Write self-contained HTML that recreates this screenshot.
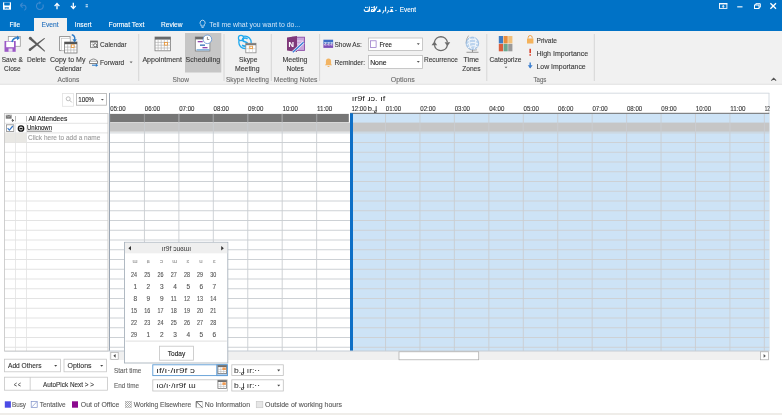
<!DOCTYPE html>
<html><head><meta charset="utf-8">
<style>
*{margin:0;padding:0}
html,body{width:782px;height:415px;overflow:hidden;background:#fff}
svg{will-change:transform;position:absolute;left:0;top:0;font-family:"Liberation Sans",sans-serif}
text{stroke-width:0.12px}
</style></head><body>
<svg width="782" height="415" viewBox="0 0 782 415">
<rect x="0" y="0" width="782" height="31" fill="#0072c6" stroke="none" stroke-width="1" /><rect x="34" y="18" width="33" height="13" fill="#f1f1f1" stroke="none" stroke-width="1" /><rect x="3" y="2" width="8" height="7.7" fill="#fff" stroke="none" stroke-width="1" /><rect x="3" y="2" width="8" height="0.5" fill="#0072c6" stroke="none" stroke-width="1" opacity="0.6"/><path d="M4.2 2.5 H9.8 V4.4 Q9.8 5.6 8.6 5.6 H5.4 Q4.2 5.6 4.2 4.4z" fill="#0072c6" stroke="none" stroke-width="1" /><rect x="4.7" y="7.3" width="4.2" height="1.3" fill="#0072c6" stroke="none" stroke-width="1" /><rect x="6.4" y="7.9" width="0.8" height="0.7" fill="#fff" stroke="none" stroke-width="1" /><path d="M20.2 5.3 L22.6 2.9 M20.2 5.3 L22.6 7.7 M20.6 5.3 H24.3 A2.6 2.6 0 0 1 24.3 10.2" fill="none" stroke="#3d8ad0" stroke-width="1.1" /><path d="M42.9 4.6 A3.4 3.4 0 1 1 39.8 2.7" fill="none" stroke="#3d8ad0" stroke-width="1.1" /><path d="M39.2 1.2 L41.4 2.8 L39.2 4.4z" fill="#3d8ad0" stroke="none" stroke-width="1" /><path d="M57 9.2V3.6 M54.6 6.1 L57 3.4 L59.4 6.1" fill="none" stroke="#fff" stroke-width="1.3" /><path d="M73.3 2.8V8.4 M70.9 5.9 L73.3 8.6 L75.7 5.9" fill="none" stroke="#fff" stroke-width="1.3" /><rect x="85.6" y="4.4" width="2.3" height="0.9" fill="#fff" stroke="none" stroke-width="1" /><rect x="85.6" y="6.3" width="2.3" height="0.9" fill="#fff" stroke="none" stroke-width="1" /><path d="M364.3 9.3 Q364 11.5 366 11.5 H368.2 V9.6 M369.4 6.6 V11.5 M370.8 11.5 H373.3 Q373.6 9.4 372.2 9.5 Q371 9.6 371.6 11 M374.3 6 V11.5 L377 6.6 M377 11.5 H380.6 M383.9 10.1 Q384.1 12.6 382.2 13.2 M385.6 6.6 V11.5 M388.4 10.1 Q388.6 12.6 386.7 13.2 M389.5 11.5 H393.3" fill="none" stroke="#fff" stroke-width="1.1" /><circle cx="365.6" cy="7.4" r="0.65" fill="#fff"/><circle cx="367.1" cy="7.4" r="0.65" fill="#fff"/><circle cx="371.7" cy="7.4" r="0.65" fill="#fff"/><circle cx="373.1" cy="7.4" r="0.65" fill="#fff"/><circle cx="391" cy="7.4" r="0.65" fill="#fff"/><circle cx="392.5" cy="7.4" r="0.65" fill="#fff"/><circle cx="379.6" cy="10.4" r="1.05" fill="#fff"/><circle cx="391.6" cy="10.2" r="1.15" fill="#fff"/><text x="394.8" y="12" font-size="7.2" fill="#fff" stroke="#fff" textLength="2.4" lengthAdjust="spacingAndGlyphs" >-</text><text x="399.8" y="12" font-size="7.5" fill="#fff" stroke="#fff" textLength="16.3" lengthAdjust="spacingAndGlyphs" >Event</text><rect x="719.5" y="3.6" width="7.4" height="4.8" fill="none" stroke="#fff" stroke-width="0.9" /><rect x="719.1" y="3.2" width="8.2" height="1.2" fill="#fff" stroke="none" stroke-width="1" /><path d="M723.2 4.9 L721.6 6.6 H724.8z M722.8 6.4 h0.8 v1.6 h-0.8z" fill="#fff" stroke="none" stroke-width="1" /><rect x="737.2" y="6.3" width="5.3" height="1.1" fill="#fff" stroke="none" stroke-width="1" /><rect x="754.5" y="5" width="4.5" height="3.5" fill="none" stroke="#fff" stroke-width="1" /><path d="M755.8 5V3.7h4.5v3.5h-1.3" fill="none" stroke="#fff" stroke-width="1" /><path d="M770.4 3.3 L776 8.8 M776 3.3 L770.4 8.8" fill="none" stroke="#fff" stroke-width="1.3" /><text x="9.6" y="27.2" font-size="7.5" fill="#fff" stroke="#fff" textLength="10.4" lengthAdjust="spacingAndGlyphs" >File</text><text x="41.5" y="27.2" font-size="7.5" fill="#2672be" stroke="#2672be" textLength="17" lengthAdjust="spacingAndGlyphs" >Event</text><text x="74.8" y="27.2" font-size="7.5" fill="#fff" stroke="#fff" textLength="16.7" lengthAdjust="spacingAndGlyphs" >Insert</text><text x="108.5" y="27.2" font-size="7.5" fill="#fff" stroke="#fff" textLength="35.8" lengthAdjust="spacingAndGlyphs" >Format Text</text><text x="161" y="27.2" font-size="7.5" fill="#fff" stroke="#fff" textLength="21.5" lengthAdjust="spacingAndGlyphs" >Review</text><path d="M202.6 20.2 a2.6 2.6 0 0 0 -1.6 4.6 v1.3 h3.2 v-1.3 a2.6 2.6 0 0 0 -1.6 -4.6z" fill="none" stroke="#e0ecf8" stroke-width="0.8" /><rect x="201.5" y="27" width="2.2" height="0.7" fill="#e0ecf8" stroke="none" stroke-width="1" /><text x="209.2" y="27.2" font-size="7.5" fill="#d2e4f6" stroke="#d2e4f6" textLength="91" lengthAdjust="spacingAndGlyphs" style="stroke-width:0">Tell me what you want to do...</text><rect x="0" y="31" width="782" height="53" fill="#f1f1f1" stroke="none" stroke-width="1" /><line x1="0" y1="84.3" x2="782" y2="84.3" stroke="#dedede" stroke-width="0.9" /><rect x="8.3" y="36.5" width="12" height="9.8" fill="#fff" stroke="#9a9a9a" stroke-width="0.8" /><rect x="4.5" y="41" width="11.2" height="10.8" fill="#9b59c6" stroke="none" stroke-width="1" /><rect x="6.2" y="41.6" width="7.8" height="5.6" fill="#fff" stroke="none" stroke-width="1" /><rect x="8.5" y="48.5" width="4" height="3.3" fill="#e8dcf0" stroke="none" stroke-width="1" /><path d="M12 42 Q13 37.5 18 37.8" fill="none" stroke="#2f7dc8" stroke-width="1.6" /><path d="M17 35.6 L20 37.9 L17 40.2z" fill="#2f7dc8" stroke="none" stroke-width="1" /><text x="1.7" y="62" font-size="7.5" fill="#3c3c3c" stroke="#3c3c3c" textLength="21.1" lengthAdjust="spacingAndGlyphs" >Save &amp;</text><text x="4" y="71" font-size="7.5" fill="#3c3c3c" stroke="#3c3c3c" textLength="16.7" lengthAdjust="spacingAndGlyphs" >Close</text><path d="M29.30 39.21 L44.07 51.27 L44.73 50.53 L31.10 37.19z" fill="#5c5c5c" stroke="none" stroke-width="1" /><circle cx="30.2" cy="38.2" r="1.35" fill="#5c5c5c"/><circle cx="44.4" cy="50.9" r="0.5" fill="#5c5c5c"/><path d="M30.63 50.65 L44.78 38.76 L44.22 38.04 L29.17 48.75z" fill="#5c5c5c" stroke="none" stroke-width="1" /><circle cx="29.9" cy="49.7" r="1.2" fill="#5c5c5c"/><circle cx="44.5" cy="38.4" r="0.45" fill="#5c5c5c"/><text x="27" y="62" font-size="7.5" fill="#3c3c3c" stroke="#3c3c3c" textLength="19" lengthAdjust="spacingAndGlyphs" >Delete</text><rect x="59.6" y="36.6" width="10.5" height="14" fill="#fff" stroke="#8c8c8c" stroke-width="0.9" /><rect x="61.6" y="38.3" width="8.5" height="12.3" fill="#fff" stroke="#bdbdbd" stroke-width="0.6" /><rect x="64.6" y="42" width="12.4" height="11" fill="#fff" stroke="#777" stroke-width="0.8" /><rect x="64.6" y="42" width="12.4" height="2.2" fill="#555" stroke="none" stroke-width="1" /><line x1="67.69999999999999" y1="44.2" x2="67.69999999999999" y2="53" stroke="#999" stroke-width="0.5" /><line x1="70.8" y1="44.2" x2="70.8" y2="53" stroke="#999" stroke-width="0.5" /><line x1="73.89999999999999" y1="44.2" x2="73.89999999999999" y2="53" stroke="#999" stroke-width="0.5" /><line x1="64.6" y1="47.1" x2="77" y2="47.1" stroke="#999" stroke-width="0.5" /><line x1="64.6" y1="50.0" x2="77" y2="50.0" stroke="#999" stroke-width="0.5" /><rect x="71.3" y="44.8" width="2.8" height="2.6" fill="#fff" stroke="#e8912e" stroke-width="0.8" /><path d="M71.8 34.7 Q75.5 35.5 74.6 40" fill="none" stroke="#2f7dc8" stroke-width="1.4" /><path d="M72.4 39.2 L74.6 42.4 L76.8 39.2z" fill="#2f7dc8" stroke="none" stroke-width="1" /><text x="49.9" y="62" font-size="7.5" fill="#3c3c3c" stroke="#3c3c3c" textLength="35.6" lengthAdjust="spacingAndGlyphs" >Copy to My</text><text x="54.9" y="71" font-size="7.5" fill="#3c3c3c" stroke="#3c3c3c" textLength="26.7" lengthAdjust="spacingAndGlyphs" >Calendar</text><rect x="90.5" y="41" width="7" height="6.3" fill="#fff" stroke="#6a6a6a" stroke-width="0.8" /><rect x="90.5" y="41" width="7" height="1.5" fill="#6a6a6a" stroke="none" stroke-width="1" /><line x1="92.8" y1="42.5" x2="92.8" y2="47.3" stroke="#aaa" stroke-width="0.5" /><line x1="90.5" y1="44.6" x2="94.5" y2="44.6" stroke="#aaa" stroke-width="0.5" /><circle cx="95.2" cy="45.2" r="1.6" fill="#fff" stroke="#555" stroke-width="0.8"/><line x1="96.3" y1="46.3" x2="97.9" y2="47.9" stroke="#555" stroke-width="0.9" /><text x="100" y="47" font-size="7.5" fill="#3c3c3c" stroke="#3c3c3c" textLength="26.6" lengthAdjust="spacingAndGlyphs" >Calendar</text><path d="M89.5 63.5 V61 Q93.5 57 97.5 61 V63.5 z" fill="#fff" stroke="#666" stroke-width="0.8" /><line x1="89.6" y1="61.2" x2="97.4" y2="61.2" stroke="#666" stroke-width="0.6" /><path d="M92 65.2 H96.5" fill="none" stroke="#2f7dc8" stroke-width="1.1" /><path d="M95.8 63.4 L98.2 65.2 L95.8 67z" fill="#2f7dc8" stroke="none" stroke-width="1" /><text x="100" y="65.2" font-size="7.5" fill="#3c3c3c" stroke="#3c3c3c" textLength="24.3" lengthAdjust="spacingAndGlyphs" >Forward</text><path d="M129.6 61.6 h3 l-1.5 1.6z" fill="#666" stroke="none" stroke-width="1" /><text x="57.5" y="82" font-size="7.5" fill="#6d6d6d" stroke="#6d6d6d" textLength="21.7" lengthAdjust="spacingAndGlyphs" >Actions</text><line x1="138.7" y1="34" x2="138.7" y2="81" stroke="#d6d6d6" stroke-width="1" /><rect x="155" y="37" width="15.5" height="13.8" fill="#fff" stroke="#7d7d7d" stroke-width="0.8" /><rect x="155" y="37" width="15.5" height="2.6" fill="#6a6a6a" stroke="none" stroke-width="1" /><line x1="158.1" y1="39.6" x2="158.1" y2="50.8" stroke="#aaa" stroke-width="0.6" /><line x1="161.2" y1="39.6" x2="161.2" y2="50.8" stroke="#aaa" stroke-width="0.6" /><line x1="164.3" y1="39.6" x2="164.3" y2="50.8" stroke="#aaa" stroke-width="0.6" /><line x1="167.4" y1="39.6" x2="167.4" y2="50.8" stroke="#aaa" stroke-width="0.6" /><line x1="155" y1="42.4" x2="170.5" y2="42.4" stroke="#aaa" stroke-width="0.6" /><line x1="155" y1="45.2" x2="170.5" y2="45.2" stroke="#aaa" stroke-width="0.6" /><line x1="155" y1="48.0" x2="170.5" y2="48.0" stroke="#aaa" stroke-width="0.6" /><rect x="164.4" y="42.5" width="3" height="2.6" fill="#fff" stroke="#e8912e" stroke-width="0.8" /><text x="142.4" y="62" font-size="7.5" fill="#3c3c3c" stroke="#3c3c3c" textLength="39.6" lengthAdjust="spacingAndGlyphs" >Appointment</text><rect x="185" y="33" width="36.3" height="39.5" fill="#c6c6c6" stroke="none" stroke-width="1" /><rect x="195.3" y="37" width="14.6" height="14" fill="#fff" stroke="#7d7d7d" stroke-width="0.8" /><rect x="195.3" y="37" width="14.6" height="2.4" fill="#6a6a6a" stroke="none" stroke-width="1" /><rect x="197.7" y="41" width="5" height="1.3" fill="#8e44ad" stroke="none" stroke-width="1" /><rect x="200" y="44.5" width="5" height="1.3" fill="#2f6fb5" stroke="none" stroke-width="1" /><rect x="202.5" y="47" width="5" height="1.3" fill="#8e44ad" stroke="none" stroke-width="1" /><rect x="196.5" y="49.3" width="13" height="1.1" fill="#5b9bd5" stroke="none" stroke-width="1" /><circle cx="207.4" cy="39.3" r="4.3" fill="#fff" stroke="#5b8fd0" stroke-width="0.8"/><path d="M207.4 36.9 V39.5 H209.3" fill="none" stroke="#444" stroke-width="0.6" /><text x="185.6" y="62" font-size="7.5" fill="#3c3c3c" stroke="#3c3c3c" textLength="34.6" lengthAdjust="spacingAndGlyphs" >Scheduling</text><text x="172.6" y="82" font-size="7.5" fill="#6d6d6d" stroke="#6d6d6d" textLength="16.4" lengthAdjust="spacingAndGlyphs" >Show</text><line x1="224" y1="34" x2="224" y2="81" stroke="#d6d6d6" stroke-width="1" /><circle cx="245" cy="42.3" r="6.2" fill="none" stroke="#20a9ef" stroke-width="1.3"/><circle cx="241" cy="38" r="2.6" fill="#f1f1f1" stroke="#20a9ef" stroke-width="1.2"/><path d="M247.6 38.8 Q245 37.2 242.8 38.6 Q241.5 40.8 245 41.8 Q248.6 42.8 247.2 45.4 Q245 47 242 45.3" fill="none" stroke="#20a9ef" stroke-width="1.6" /><rect x="245.8" y="43.3" width="10.2" height="9.5" fill="#fff" stroke="#8a8a8a" stroke-width="0.8" /><rect x="245.8" y="43.3" width="10.2" height="1.9" fill="#7a7a7a" stroke="none" stroke-width="1" /><line x1="249.2" y1="45.2" x2="249.2" y2="52.8" stroke="#c0c0c0" stroke-width="0.5" /><line x1="252.6" y1="45.2" x2="252.6" y2="52.8" stroke="#c0c0c0" stroke-width="0.5" /><line x1="245.8" y1="48.7" x2="256" y2="48.7" stroke="#c0c0c0" stroke-width="0.5" /><rect x="249.8" y="46.2" width="2.6" height="2.4" fill="#fff" stroke="#e8912e" stroke-width="0.8" /><text x="239" y="62" font-size="7.5" fill="#3c3c3c" stroke="#3c3c3c" textLength="18.5" lengthAdjust="spacingAndGlyphs" >Skype</text><text x="235" y="71" font-size="7.5" fill="#3c3c3c" stroke="#3c3c3c" textLength="24.5" lengthAdjust="spacingAndGlyphs" >Meeting</text><text x="226" y="82" font-size="7.5" fill="#6d6d6d" stroke="#6d6d6d" textLength="43" lengthAdjust="spacingAndGlyphs" >Skype Meeting</text><line x1="271.3" y1="34" x2="271.3" y2="81" stroke="#d6d6d6" stroke-width="1" /><rect x="292.5" y="37.2" width="12" height="13.2" fill="#c9a3db" stroke="#8c4fa8" stroke-width="0.9" /><line x1="294" y1="41" x2="303" y2="41" stroke="#fff" stroke-width="0.6" /><line x1="294" y1="44" x2="303" y2="44" stroke="#fff" stroke-width="0.6" /><path d="M287 37.5 L297 36 V52 L287 50.5z" fill="#80397b" stroke="none" stroke-width="1" /><text x="288.6" y="47.2" font-size="7.5" fill="#fff" stroke="#fff" font-weight="bold">N</text><path d="M292.8 52.2 L303.6 42.2" fill="none" stroke="#fff" stroke-width="2.6" /><path d="M292.8 52.2 L303.6 42.2" fill="none" stroke="#3a7bd5" stroke-width="1.5" /><text x="282.4" y="62" font-size="7.5" fill="#3c3c3c" stroke="#3c3c3c" textLength="25.1" lengthAdjust="spacingAndGlyphs" >Meeting</text><text x="286.5" y="71" font-size="7.5" fill="#3c3c3c" stroke="#3c3c3c" textLength="17.3" lengthAdjust="spacingAndGlyphs" >Notes</text><text x="273.8" y="82" font-size="7.5" fill="#6d6d6d" stroke="#6d6d6d" textLength="43.5" lengthAdjust="spacingAndGlyphs" >Meeting Notes</text><line x1="319.6" y1="34" x2="319.6" y2="81" stroke="#d6d6d6" stroke-width="1" /><rect x="323.4" y="39.7" width="9.7" height="4.1" fill="#3f6fc6" stroke="none" stroke-width="1" /><rect x="323.4" y="43.8" width="9.7" height="4.1" fill="#7c4fb8" stroke="none" stroke-width="1" /><path d="M324.2 42.6 h2.2 l-2 2.4 h2.2 M327.4 42.6 h2.2 l-2 2.4 h2.2 M330.5 42.6 h2 l-1.8 2.4 h1.9" fill="none" stroke="#fff" stroke-width="0.7" /><text x="334.5" y="46.5" font-size="7.5" fill="#3c3c3c" stroke="#3c3c3c" textLength="27.3" lengthAdjust="spacingAndGlyphs" >Show As:</text><path d="M328.5 58.5 q-2.6 0 -2.6 3 v2.6 l-1 1.2 h7.2 l-1 -1.2 v-2.6 q0 -3 -2.6 -3z" fill="#f2b463" stroke="none" stroke-width="1" /><rect x="327.6" y="66" width="1.8" height="1" fill="#f2b463" stroke="none" stroke-width="1" /><text x="334.5" y="64.7" font-size="7.5" fill="#3c3c3c" stroke="#3c3c3c" textLength="30.5" lengthAdjust="spacingAndGlyphs" >Reminder:</text><rect x="368.5" y="38" width="54" height="12.4" fill="#fff" stroke="#bcbcbc" stroke-width="0.8" /><rect x="370.6" y="40.8" width="5.5" height="6.8" fill="#fff" stroke="#8e6cc4" stroke-width="0.7" /><text x="379.4" y="47" font-size="7.5" fill="#262626" stroke="#262626" textLength="12.5" lengthAdjust="spacingAndGlyphs" >Free</text><path d="M416.8 43.3 h3 l-1.5 1.6z" fill="#555" stroke="none" stroke-width="1" /><rect x="368.5" y="55.5" width="54" height="13" fill="#fff" stroke="#bcbcbc" stroke-width="0.8" /><text x="370.2" y="64.8" font-size="7.5" fill="#262626" stroke="#262626" textLength="16.3" lengthAdjust="spacingAndGlyphs" >None</text><path d="M416.8 61.1 h3 l-1.5 1.6z" fill="#555" stroke="none" stroke-width="1" /><path d="M434.4 42.2 A6.6 6.6 0 0 1 447.4 42.2" fill="none" stroke="#6b6b6b" stroke-width="1.3" /><path d="M447.4 45.2 A6.6 6.6 0 0 1 434.4 45.2" fill="none" stroke="#6b6b6b" stroke-width="1.3" /><path d="M444.6 42.3 L450.2 42.3 L447.4 46.2z" fill="#6b6b6b" stroke="none" stroke-width="1" /><path d="M431.6 45.2 L437.2 45.2 L434.4 41.3z" fill="#6b6b6b" stroke="none" stroke-width="1" /><text x="424" y="62" font-size="7.5" fill="#3c3c3c" stroke="#3c3c3c" textLength="33.8" lengthAdjust="spacingAndGlyphs" >Recurrence</text><path d="M468.6 35.6 Q463 43 470 49.5 Q473.5 51 477 49.8" fill="none" stroke="#9a9a9a" stroke-width="0.8" /><circle cx="472.4" cy="43.4" r="6.3" fill="#bcd4ee" stroke="#82acdc" stroke-width="0.6"/><path d="M467.5 41 Q472 37.5 477 40.5 M466.6 44.8 Q472 40.5 478 44 M467.8 48 Q473 44 477.6 46.8 M470 37.5 Q467.5 43 471.5 49.3 M474.5 37.5 Q477.5 43 474 49.5" fill="none" stroke="#f4f8fc" stroke-width="1" /><rect x="472" y="49.8" width="0.9" height="2.2" fill="#8a8a8a" stroke="none" stroke-width="1" /><rect x="466.5" y="51.8" width="12" height="0.9" fill="#8a8a8a" stroke="none" stroke-width="1" /><text x="463.5" y="62" font-size="7.5" fill="#3c3c3c" stroke="#3c3c3c" textLength="15.5" lengthAdjust="spacingAndGlyphs" >Time</text><text x="462.2" y="71" font-size="7.5" fill="#3c3c3c" stroke="#3c3c3c" textLength="18.4" lengthAdjust="spacingAndGlyphs" >Zones</text><text x="390.7" y="82" font-size="7.5" fill="#6d6d6d" stroke="#6d6d6d" textLength="24.2" lengthAdjust="spacingAndGlyphs" >Options</text><line x1="486.8" y1="34" x2="486.8" y2="81" stroke="#d6d6d6" stroke-width="1" /><rect x="498.8" y="36.0" width="4.2" height="7.4" fill="#3e7cc4" stroke="none" stroke-width="1" /><rect x="503.5" y="36.0" width="4.2" height="7.4" fill="#e98d3c" stroke="none" stroke-width="1" /><rect x="508.2" y="36.0" width="4.2" height="7.4" fill="#f0c07a" stroke="none" stroke-width="1" /><rect x="498.8" y="43.9" width="4.2" height="7.4" fill="#d95f3e" stroke="none" stroke-width="1" /><rect x="503.5" y="43.9" width="4.2" height="7.4" fill="#6aa78f" stroke="none" stroke-width="1" /><rect x="508.2" y="43.9" width="4.2" height="7.4" fill="#9a9a9a" stroke="none" stroke-width="1" /><text x="489.5" y="62" font-size="7.5" fill="#3c3c3c" stroke="#3c3c3c" textLength="32" lengthAdjust="spacingAndGlyphs" >Categorize</text><path d="M504.6 66.8 h2.8 l-1.4 1.5z" fill="#666" stroke="none" stroke-width="1" /><path d="M528.2 38.5 v-1 a2 2 0 0 1 4 0 v1" fill="none" stroke="#f0a24a" stroke-width="1" /><rect x="527" y="38.5" width="6.4" height="5" fill="#f4b25b" stroke="none" stroke-width="1" /><text x="536.5" y="42.6" font-size="7.5" fill="#3c3c3c" stroke="#3c3c3c" textLength="20.5" lengthAdjust="spacingAndGlyphs" >Private</text><rect x="529.4" y="48.8" width="1.6" height="4.3" fill="#d9412b" stroke="none" stroke-width="1" /><rect x="529.4" y="54.2" width="1.6" height="1.5" fill="#d9412b" stroke="none" stroke-width="1" /><text x="536.5" y="55.8" font-size="7.5" fill="#3c3c3c" stroke="#3c3c3c" textLength="51.7" lengthAdjust="spacingAndGlyphs" >High Importance</text><path d="M530.2 62.5 v5" fill="none" stroke="#3d7fcf" stroke-width="1.4" /><path d="M527.8 65.3 L530.2 68.5 L532.6 65.3z" fill="#3d7fcf" stroke="none" stroke-width="1" /><text x="536.5" y="69" font-size="7.5" fill="#3c3c3c" stroke="#3c3c3c" textLength="49.2" lengthAdjust="spacingAndGlyphs" >Low Importance</text><text x="533.4" y="82" font-size="7.5" fill="#6d6d6d" stroke="#6d6d6d" textLength="13" lengthAdjust="spacingAndGlyphs" >Tags</text><line x1="594.3" y1="34" x2="594.3" y2="81" stroke="#d6d6d6" stroke-width="1" /><path d="M771.3 80.6 L773.7 78.3 L776.1 80.6" fill="none" stroke="#555" stroke-width="1.1" />
<rect x="62.5" y="93.5" width="11" height="12.8" fill="#fff" stroke="#e2e2e2" stroke-width="0.8" /><circle cx="68.2" cy="98.8" r="2" fill="none" stroke="#b5b5b5" stroke-width="0.9"/><line x1="69.6" y1="100.2" x2="71.8" y2="102.4" stroke="#b5b5b5" stroke-width="1" /><rect x="76.5" y="93.4" width="30" height="11.8" fill="#fff" stroke="#b0b0b0" stroke-width="0.8" /><text x="78.2" y="101.8" font-size="7.5" fill="#262626" stroke="#262626" textLength="16" lengthAdjust="spacingAndGlyphs" >100%</text><path d="M100.9 99 h3 l-1.5 1.6z" fill="#555" stroke="none" stroke-width="1" /><rect x="109.5" y="93" width="659.8" height="20.5" fill="#fff" stroke="none" stroke-width="1" /><line x1="109.5" y1="93.2" x2="769.3" y2="93.2" stroke="#d5dbe1" stroke-width="1" /><line x1="769.0" y1="93" x2="769.0" y2="351" stroke="#d5dbe1" stroke-width="1" /><rect x="350" y="113.5" width="419.29999999999995" height="237.5" fill="#cde3f6" stroke="none" stroke-width="1" /><line x1="109.5" y1="132.9" x2="769.3" y2="132.9" stroke="#cdd1d5" stroke-width="1" /><line x1="109.5" y1="142.5" x2="769.3" y2="142.5" stroke="#cdd1d5" stroke-width="1" /><line x1="109.5" y1="152.25" x2="769.3" y2="152.25" stroke="#cdd1d5" stroke-width="1" /><line x1="109.5" y1="162.0" x2="769.3" y2="162.0" stroke="#cdd1d5" stroke-width="1" /><line x1="109.5" y1="171.75" x2="769.3" y2="171.75" stroke="#cdd1d5" stroke-width="1" /><line x1="109.5" y1="181.5" x2="769.3" y2="181.5" stroke="#cdd1d5" stroke-width="1" /><line x1="109.5" y1="191.25" x2="769.3" y2="191.25" stroke="#cdd1d5" stroke-width="1" /><line x1="109.5" y1="201.0" x2="769.3" y2="201.0" stroke="#cdd1d5" stroke-width="1" /><line x1="109.5" y1="210.75" x2="769.3" y2="210.75" stroke="#cdd1d5" stroke-width="1" /><line x1="109.5" y1="220.5" x2="769.3" y2="220.5" stroke="#cdd1d5" stroke-width="1" /><line x1="109.5" y1="230.25" x2="769.3" y2="230.25" stroke="#cdd1d5" stroke-width="1" /><line x1="109.5" y1="240.0" x2="769.3" y2="240.0" stroke="#cdd1d5" stroke-width="1" /><line x1="109.5" y1="249.75" x2="769.3" y2="249.75" stroke="#cdd1d5" stroke-width="1" /><line x1="109.5" y1="259.5" x2="769.3" y2="259.5" stroke="#cdd1d5" stroke-width="1" /><line x1="109.5" y1="269.25" x2="769.3" y2="269.25" stroke="#cdd1d5" stroke-width="1" /><line x1="109.5" y1="279.0" x2="769.3" y2="279.0" stroke="#cdd1d5" stroke-width="1" /><line x1="109.5" y1="288.75" x2="769.3" y2="288.75" stroke="#cdd1d5" stroke-width="1" /><line x1="109.5" y1="298.5" x2="769.3" y2="298.5" stroke="#cdd1d5" stroke-width="1" /><line x1="109.5" y1="308.25" x2="769.3" y2="308.25" stroke="#cdd1d5" stroke-width="1" /><line x1="109.5" y1="318.0" x2="769.3" y2="318.0" stroke="#cdd1d5" stroke-width="1" /><line x1="109.5" y1="327.75" x2="769.3" y2="327.75" stroke="#cdd1d5" stroke-width="1" /><line x1="109.5" y1="337.5" x2="769.3" y2="337.5" stroke="#cdd1d5" stroke-width="1" /><line x1="109.5" y1="347.25" x2="769.3" y2="347.25" stroke="#cdd1d5" stroke-width="1" /><rect x="109.5" y="113.9" width="239.3" height="8.3" fill="#767676" stroke="none" stroke-width="1" /><rect x="109.5" y="122.6" width="659.8" height="9.1" fill="#c6c6c6" stroke="none" stroke-width="1" /><line x1="110.0" y1="113.9" x2="110.0" y2="122.2" stroke="#8a8a8a" stroke-width="0.8" /><text x="110.3" y="110.8" font-size="7.5" fill="#333" stroke="#333" textLength="15.3" lengthAdjust="spacingAndGlyphs" >05:00</text><line x1="144.44" y1="113.9" x2="144.44" y2="351" stroke="#c9cdd1" stroke-width="0.9" /><line x1="144.44" y1="113.9" x2="144.44" y2="122.2" stroke="#8a8a8a" stroke-width="0.8" /><text x="144.74" y="110.8" font-size="7.5" fill="#333" stroke="#333" textLength="15.3" lengthAdjust="spacingAndGlyphs" >06:00</text><line x1="178.88" y1="113.9" x2="178.88" y2="351" stroke="#c9cdd1" stroke-width="0.9" /><line x1="178.88" y1="113.9" x2="178.88" y2="122.2" stroke="#8a8a8a" stroke-width="0.8" /><text x="179.18" y="110.8" font-size="7.5" fill="#333" stroke="#333" textLength="15.3" lengthAdjust="spacingAndGlyphs" >07:00</text><line x1="213.32" y1="113.9" x2="213.32" y2="351" stroke="#c9cdd1" stroke-width="0.9" /><line x1="213.32" y1="113.9" x2="213.32" y2="122.2" stroke="#8a8a8a" stroke-width="0.8" /><text x="213.62" y="110.8" font-size="7.5" fill="#333" stroke="#333" textLength="15.3" lengthAdjust="spacingAndGlyphs" >08:00</text><line x1="247.76" y1="113.9" x2="247.76" y2="351" stroke="#c9cdd1" stroke-width="0.9" /><line x1="247.76" y1="113.9" x2="247.76" y2="122.2" stroke="#8a8a8a" stroke-width="0.8" /><text x="248.06" y="110.8" font-size="7.5" fill="#333" stroke="#333" textLength="15.3" lengthAdjust="spacingAndGlyphs" >09:00</text><line x1="282.2" y1="113.9" x2="282.2" y2="351" stroke="#c9cdd1" stroke-width="0.9" /><line x1="282.2" y1="113.9" x2="282.2" y2="122.2" stroke="#8a8a8a" stroke-width="0.8" /><text x="282.5" y="110.8" font-size="7.5" fill="#333" stroke="#333" textLength="15.3" lengthAdjust="spacingAndGlyphs" >10:00</text><line x1="316.64" y1="113.9" x2="316.64" y2="351" stroke="#c9cdd1" stroke-width="0.9" /><line x1="316.64" y1="113.9" x2="316.64" y2="122.2" stroke="#8a8a8a" stroke-width="0.8" /><text x="316.94" y="110.8" font-size="7.5" fill="#333" stroke="#333" textLength="15.3" lengthAdjust="spacingAndGlyphs" >11:00</text><line x1="351.08" y1="113.9" x2="351.08" y2="351" stroke="#c9cdd1" stroke-width="0.9" /><text x="351.38" y="110.8" font-size="7.5" fill="#333" stroke="#333" textLength="15.3" lengthAdjust="spacingAndGlyphs" >12:00</text><line x1="385.52" y1="113.9" x2="385.52" y2="351" stroke="#c9cdd1" stroke-width="0.9" /><text x="385.82" y="110.8" font-size="7.5" fill="#333" stroke="#333" textLength="15.3" lengthAdjust="spacingAndGlyphs" >01:00</text><line x1="419.96" y1="113.9" x2="419.96" y2="351" stroke="#c9cdd1" stroke-width="0.9" /><text x="420.26" y="110.8" font-size="7.5" fill="#333" stroke="#333" textLength="15.3" lengthAdjust="spacingAndGlyphs" >02:00</text><line x1="454.4" y1="113.9" x2="454.4" y2="351" stroke="#c9cdd1" stroke-width="0.9" /><text x="454.7" y="110.8" font-size="7.5" fill="#333" stroke="#333" textLength="15.3" lengthAdjust="spacingAndGlyphs" >03:00</text><line x1="488.84" y1="113.9" x2="488.84" y2="351" stroke="#c9cdd1" stroke-width="0.9" /><text x="489.14" y="110.8" font-size="7.5" fill="#333" stroke="#333" textLength="15.3" lengthAdjust="spacingAndGlyphs" >04:00</text><line x1="523.28" y1="113.9" x2="523.28" y2="351" stroke="#c9cdd1" stroke-width="0.9" /><text x="523.5799999999999" y="110.8" font-size="7.5" fill="#333" stroke="#333" textLength="15.3" lengthAdjust="spacingAndGlyphs" >05:00</text><line x1="557.72" y1="113.9" x2="557.72" y2="351" stroke="#c9cdd1" stroke-width="0.9" /><text x="558.02" y="110.8" font-size="7.5" fill="#333" stroke="#333" textLength="15.3" lengthAdjust="spacingAndGlyphs" >06:00</text><line x1="592.16" y1="113.9" x2="592.16" y2="351" stroke="#c9cdd1" stroke-width="0.9" /><text x="592.4599999999999" y="110.8" font-size="7.5" fill="#333" stroke="#333" textLength="15.3" lengthAdjust="spacingAndGlyphs" >07:00</text><line x1="626.5999999999999" y1="113.9" x2="626.5999999999999" y2="351" stroke="#c9cdd1" stroke-width="0.9" /><text x="626.8999999999999" y="110.8" font-size="7.5" fill="#333" stroke="#333" textLength="15.3" lengthAdjust="spacingAndGlyphs" >08:00</text><line x1="661.04" y1="113.9" x2="661.04" y2="351" stroke="#c9cdd1" stroke-width="0.9" /><text x="661.3399999999999" y="110.8" font-size="7.5" fill="#333" stroke="#333" textLength="15.3" lengthAdjust="spacingAndGlyphs" >09:00</text><line x1="695.48" y1="113.9" x2="695.48" y2="351" stroke="#c9cdd1" stroke-width="0.9" /><text x="695.78" y="110.8" font-size="7.5" fill="#333" stroke="#333" textLength="15.3" lengthAdjust="spacingAndGlyphs" >10:00</text><line x1="729.92" y1="113.9" x2="729.92" y2="351" stroke="#c9cdd1" stroke-width="0.9" /><text x="730.2199999999999" y="110.8" font-size="7.5" fill="#333" stroke="#333" textLength="15.3" lengthAdjust="spacingAndGlyphs" >11:00</text><line x1="764.3599999999999" y1="113.9" x2="764.3599999999999" y2="351" stroke="#c9cdd1" stroke-width="0.9" /><text x="764.6599999999999" y="110.8" font-size="7.5" fill="#333" stroke="#333" textLength="5" lengthAdjust="spacingAndGlyphs" >12</text><line x1="350" y1="113.3" x2="769.3" y2="113.3" stroke="#5a5a5a" stroke-width="0.9" /><line x1="109.5" y1="93" x2="109.5" y2="351" stroke="#9ba6b3" stroke-width="1" /><rect x="350" y="113.3" width="3" height="238" fill="#0e6fc6" stroke="none" stroke-width="1" /><text x="351.7" y="100.6" font-size="6.5" fill="#222" stroke="#222" textLength="33.6" lengthAdjust="spacingAndGlyphs" style="stroke-width:0">ır9f ɹɔ. ıf</text><text x="367.7" y="111" font-size="6.5" fill="#333" stroke="#333" textLength="9.3" lengthAdjust="spacingAndGlyphs" >b.ʝ</text><rect x="109.5" y="351" width="659.8" height="9" fill="#f0f0f0" stroke="none" stroke-width="1" /><line x1="4.5" y1="351" x2="769.3" y2="351" stroke="#c5ccd4" stroke-width="1" /><rect x="110.8" y="352.3" width="7.4" height="7" fill="#fff" stroke="#a8a8a8" stroke-width="0.7" /><path d="M115.6 353.9 v3.8 l-2.2 -1.9z" fill="#444" stroke="none" stroke-width="1" /><rect x="399" y="351.8" width="79.7" height="8" fill="#fff" stroke="#a8a8a8" stroke-width="0.7" /><rect x="760.5" y="351.8" width="8" height="8" fill="#fff" stroke="#a8a8a8" stroke-width="0.7" /><path d="M763.6 354 v3.8 l2.2 -1.9z" fill="#555" stroke="none" stroke-width="1" /><rect x="4.5" y="113.5" width="103.5" height="237.5" fill="#fff" stroke="none" stroke-width="1" /><line x1="4.5" y1="123.3" x2="108" y2="123.3" stroke="#dcdcdc" stroke-width="0.8" /><line x1="4.5" y1="132.9" x2="108" y2="132.9" stroke="#dcdcdc" stroke-width="0.8" /><line x1="4.5" y1="142.5" x2="108" y2="142.5" stroke="#dcdcdc" stroke-width="0.8" /><line x1="4.5" y1="152.25" x2="108" y2="152.25" stroke="#dcdcdc" stroke-width="0.8" /><line x1="4.5" y1="162.0" x2="108" y2="162.0" stroke="#dcdcdc" stroke-width="0.8" /><line x1="4.5" y1="171.75" x2="108" y2="171.75" stroke="#dcdcdc" stroke-width="0.8" /><line x1="4.5" y1="181.5" x2="108" y2="181.5" stroke="#dcdcdc" stroke-width="0.8" /><line x1="4.5" y1="191.25" x2="108" y2="191.25" stroke="#dcdcdc" stroke-width="0.8" /><line x1="4.5" y1="201.0" x2="108" y2="201.0" stroke="#dcdcdc" stroke-width="0.8" /><line x1="4.5" y1="210.75" x2="108" y2="210.75" stroke="#dcdcdc" stroke-width="0.8" /><line x1="4.5" y1="220.5" x2="108" y2="220.5" stroke="#dcdcdc" stroke-width="0.8" /><line x1="4.5" y1="230.25" x2="108" y2="230.25" stroke="#dcdcdc" stroke-width="0.8" /><line x1="4.5" y1="240.0" x2="108" y2="240.0" stroke="#dcdcdc" stroke-width="0.8" /><line x1="4.5" y1="249.75" x2="108" y2="249.75" stroke="#dcdcdc" stroke-width="0.8" /><line x1="4.5" y1="259.5" x2="108" y2="259.5" stroke="#dcdcdc" stroke-width="0.8" /><line x1="4.5" y1="269.25" x2="108" y2="269.25" stroke="#dcdcdc" stroke-width="0.8" /><line x1="4.5" y1="279.0" x2="108" y2="279.0" stroke="#dcdcdc" stroke-width="0.8" /><line x1="4.5" y1="288.75" x2="108" y2="288.75" stroke="#dcdcdc" stroke-width="0.8" /><line x1="4.5" y1="298.5" x2="108" y2="298.5" stroke="#dcdcdc" stroke-width="0.8" /><line x1="4.5" y1="308.25" x2="108" y2="308.25" stroke="#dcdcdc" stroke-width="0.8" /><line x1="4.5" y1="318.0" x2="108" y2="318.0" stroke="#dcdcdc" stroke-width="0.8" /><line x1="4.5" y1="327.75" x2="108" y2="327.75" stroke="#dcdcdc" stroke-width="0.8" /><line x1="4.5" y1="337.5" x2="108" y2="337.5" stroke="#dcdcdc" stroke-width="0.8" /><line x1="4.5" y1="347.25" x2="108" y2="347.25" stroke="#dcdcdc" stroke-width="0.8" /><rect x="4.5" y="133" width="22" height="9.5" fill="#e9e8e4" stroke="none" stroke-width="1" /><line x1="15.5" y1="123.3" x2="15.5" y2="351" stroke="#e2e2e2" stroke-width="0.8" /><line x1="26.5" y1="123.3" x2="26.5" y2="351" stroke="#e2e2e2" stroke-width="0.8" /><rect x="4.5" y="113.5" width="103.5" height="237.5" fill="none" stroke="#c4c4c4" stroke-width="0.8" /><rect x="5.8" y="114.8" width="5.8" height="3.9" fill="#7a7a7a" stroke="none" stroke-width="1" /><path d="M5.8 114.8 l2.9 2 l2.9 -2" fill="none" stroke="#ddd" stroke-width="0.5" /><path d="M12.3 119 q0.8 0.8 0.5 2 M11.6 120.4 l1.2 1 l0.9 -1.3" fill="none" stroke="#222" stroke-width="0.8" /><line x1="15.5" y1="116" x2="15.5" y2="121.5" stroke="#999" stroke-width="0.7" /><line x1="26.5" y1="116" x2="26.5" y2="121.5" stroke="#999" stroke-width="0.7" /><text x="28.4" y="121.2" font-size="7.5" fill="#262626" stroke="#262626" textLength="39" lengthAdjust="spacingAndGlyphs" >All Attendees</text><rect x="6.5" y="124.8" width="7.3" height="6.7" fill="#fff" stroke="#8c8c8c" stroke-width="0.8" /><path d="M7.6 128.2 l1.8 2 l3.4 -4.2" fill="none" stroke="#3a78c4" stroke-width="1.2" /><circle cx="21" cy="128.5" r="2.7" fill="#fff" stroke="#111" stroke-width="1.3"/><rect x="19.5" y="127.8" width="3" height="1.6" fill="#111" stroke="none" stroke-width="1" /><text x="27" y="130.3" font-size="7.5" fill="#222" stroke="#222" textLength="25" lengthAdjust="spacingAndGlyphs" >Unknown</text><line x1="27" y1="131.2" x2="52" y2="131.2" stroke="#333" stroke-width="0.6" /><text x="28" y="140" font-size="7.5" fill="#9c9c9c" stroke="#9c9c9c" textLength="72.4" lengthAdjust="spacingAndGlyphs" >Click here to add a name</text><rect x="124.5" y="242.3" width="103.30000000000001" height="120.69999999999999" fill="#fff" stroke="#a9b3bd" stroke-width="0.9" /><rect x="125.0" y="242.8" width="102.30000000000001" height="10.5" fill="#efefef" stroke="none" stroke-width="1" /><path d="M131 246 v4.4 l-2.6 -2.2z" fill="#333" stroke="none" stroke-width="1" /><path d="M221.2 246 v4.4 l2.6 -2.2z" fill="#333" stroke="none" stroke-width="1" /><text x="161.6" y="251" font-size="6.5" fill="#333" stroke="#333" textLength="29.5" lengthAdjust="spacingAndGlyphs" style="stroke-width:0">ır9f ɔuɞɯı</text><text x="135" y="263" font-size="6" fill="#9a9a9a" stroke="#9a9a9a" text-anchor="middle" >ɯ</text><text x="148.2" y="263" font-size="6" fill="#9a9a9a" stroke="#9a9a9a" text-anchor="middle" >ɕ</text><text x="161.5" y="263" font-size="6" fill="#9a9a9a" stroke="#9a9a9a" text-anchor="middle" >ɔ</text><text x="174.8" y="263" font-size="6" fill="#9a9a9a" stroke="#9a9a9a" text-anchor="middle" >ɯ</text><text x="188" y="263" font-size="6" fill="#9a9a9a" stroke="#9a9a9a" text-anchor="middle" >ɛ</text><text x="201" y="263" font-size="6" fill="#9a9a9a" stroke="#9a9a9a" text-anchor="middle" >u</text><text x="214.2" y="263" font-size="6" fill="#9a9a9a" stroke="#9a9a9a" text-anchor="middle" >ɛ</text><text x="137" y="276.5" font-size="6.5" fill="#555" stroke="#555" textLength="6" lengthAdjust="spacingAndGlyphs" text-anchor="end" >24</text><text x="150.2" y="276.5" font-size="6.5" fill="#555" stroke="#555" textLength="6" lengthAdjust="spacingAndGlyphs" text-anchor="end" >25</text><text x="163.5" y="276.5" font-size="6.5" fill="#555" stroke="#555" textLength="6" lengthAdjust="spacingAndGlyphs" text-anchor="end" >26</text><text x="176.8" y="276.5" font-size="6.5" fill="#555" stroke="#555" textLength="6" lengthAdjust="spacingAndGlyphs" text-anchor="end" >27</text><text x="190" y="276.5" font-size="6.5" fill="#555" stroke="#555" textLength="6" lengthAdjust="spacingAndGlyphs" text-anchor="end" >28</text><text x="203" y="276.5" font-size="6.5" fill="#555" stroke="#555" textLength="6" lengthAdjust="spacingAndGlyphs" text-anchor="end" >29</text><text x="216.2" y="276.5" font-size="6.5" fill="#555" stroke="#555" textLength="6" lengthAdjust="spacingAndGlyphs" text-anchor="end" >30</text><text x="137" y="288.6" font-size="6.5" fill="#555" stroke="#555" text-anchor="end" >1</text><text x="150.2" y="288.6" font-size="6.5" fill="#555" stroke="#555" text-anchor="end" >2</text><text x="163.5" y="288.6" font-size="6.5" fill="#555" stroke="#555" text-anchor="end" >3</text><text x="176.8" y="288.6" font-size="6.5" fill="#555" stroke="#555" text-anchor="end" >4</text><text x="190" y="288.6" font-size="6.5" fill="#555" stroke="#555" text-anchor="end" >5</text><text x="203" y="288.6" font-size="6.5" fill="#555" stroke="#555" text-anchor="end" >6</text><text x="216.2" y="288.6" font-size="6.5" fill="#555" stroke="#555" text-anchor="end" >7</text><text x="137" y="300.7" font-size="6.5" fill="#555" stroke="#555" text-anchor="end" >8</text><text x="150.2" y="300.7" font-size="6.5" fill="#555" stroke="#555" text-anchor="end" >9</text><text x="163.5" y="300.7" font-size="6.5" fill="#555" stroke="#555" text-anchor="end" >9</text><text x="176.8" y="300.7" font-size="6.5" fill="#555" stroke="#555" textLength="6" lengthAdjust="spacingAndGlyphs" text-anchor="end" >11</text><text x="190" y="300.7" font-size="6.5" fill="#555" stroke="#555" textLength="6" lengthAdjust="spacingAndGlyphs" text-anchor="end" >12</text><text x="203" y="300.7" font-size="6.5" fill="#555" stroke="#555" textLength="6" lengthAdjust="spacingAndGlyphs" text-anchor="end" >13</text><text x="216.2" y="300.7" font-size="6.5" fill="#555" stroke="#555" textLength="6" lengthAdjust="spacingAndGlyphs" text-anchor="end" >14</text><text x="137" y="312.8" font-size="6.5" fill="#555" stroke="#555" textLength="6" lengthAdjust="spacingAndGlyphs" text-anchor="end" >15</text><text x="150.2" y="312.8" font-size="6.5" fill="#555" stroke="#555" textLength="6" lengthAdjust="spacingAndGlyphs" text-anchor="end" >16</text><text x="163.5" y="312.8" font-size="6.5" fill="#555" stroke="#555" textLength="6" lengthAdjust="spacingAndGlyphs" text-anchor="end" >17</text><text x="176.8" y="312.8" font-size="6.5" fill="#555" stroke="#555" textLength="6" lengthAdjust="spacingAndGlyphs" text-anchor="end" >18</text><text x="190" y="312.8" font-size="6.5" fill="#555" stroke="#555" textLength="6" lengthAdjust="spacingAndGlyphs" text-anchor="end" >19</text><text x="203" y="312.8" font-size="6.5" fill="#555" stroke="#555" textLength="6" lengthAdjust="spacingAndGlyphs" text-anchor="end" >20</text><text x="216.2" y="312.8" font-size="6.5" fill="#555" stroke="#555" textLength="6" lengthAdjust="spacingAndGlyphs" text-anchor="end" >21</text><text x="137" y="324.9" font-size="6.5" fill="#555" stroke="#555" textLength="6" lengthAdjust="spacingAndGlyphs" text-anchor="end" >22</text><text x="150.2" y="324.9" font-size="6.5" fill="#555" stroke="#555" textLength="6" lengthAdjust="spacingAndGlyphs" text-anchor="end" >23</text><text x="163.5" y="324.9" font-size="6.5" fill="#555" stroke="#555" textLength="6" lengthAdjust="spacingAndGlyphs" text-anchor="end" >24</text><text x="176.8" y="324.9" font-size="6.5" fill="#555" stroke="#555" textLength="6" lengthAdjust="spacingAndGlyphs" text-anchor="end" >25</text><text x="190" y="324.9" font-size="6.5" fill="#555" stroke="#555" textLength="6" lengthAdjust="spacingAndGlyphs" text-anchor="end" >26</text><text x="203" y="324.9" font-size="6.5" fill="#555" stroke="#555" textLength="6" lengthAdjust="spacingAndGlyphs" text-anchor="end" >27</text><text x="216.2" y="324.9" font-size="6.5" fill="#555" stroke="#555" textLength="6" lengthAdjust="spacingAndGlyphs" text-anchor="end" >28</text><text x="137" y="337.0" font-size="6.5" fill="#555" stroke="#555" textLength="6" lengthAdjust="spacingAndGlyphs" text-anchor="end" >29</text><text x="150.2" y="337.0" font-size="6.5" fill="#555" stroke="#555" text-anchor="end" >1</text><text x="163.5" y="337.0" font-size="6.5" fill="#555" stroke="#555" text-anchor="end" >2</text><text x="176.8" y="337.0" font-size="6.5" fill="#555" stroke="#555" text-anchor="end" >3</text><text x="190" y="337.0" font-size="6.5" fill="#555" stroke="#555" text-anchor="end" >4</text><text x="203" y="337.0" font-size="6.5" fill="#555" stroke="#555" text-anchor="end" >5</text><text x="216.2" y="337.0" font-size="6.5" fill="#555" stroke="#555" text-anchor="end" >6</text><line x1="125.5" y1="341.1" x2="226.8" y2="341.1" stroke="#e6e6e6" stroke-width="1.2" /><rect x="159.5" y="346.2" width="34" height="14" fill="#fff" stroke="#c4c4c4" stroke-width="0.8" /><text x="176.5" y="356" font-size="7.5" fill="#222" stroke="#222" textLength="17.5" lengthAdjust="spacingAndGlyphs" text-anchor="middle" >Today</text><rect x="4.5" y="359.2" width="56" height="12.6" fill="#fff" stroke="#c6c6c6" stroke-width="0.8" /><text x="8" y="368.2" font-size="7.5" fill="#333" stroke="#333" textLength="33.5" lengthAdjust="spacingAndGlyphs" >Add Others</text><path d="M54.2 364.9 h3 l-1.5 1.8z" fill="#444" stroke="none" stroke-width="1" /><rect x="64" y="359.2" width="42.5" height="12.6" fill="#fff" stroke="#c6c6c6" stroke-width="0.8" /><text x="67.5" y="368.2" font-size="7.5" fill="#333" stroke="#333" textLength="24" lengthAdjust="spacingAndGlyphs" >Options</text><path d="M100.2 364.9 h3 l-1.5 1.8z" fill="#444" stroke="none" stroke-width="1" /><rect x="4.5" y="377.2" width="103" height="13" fill="#fff" stroke="#c6c6c6" stroke-width="0.8" /><line x1="30.2" y1="377.2" x2="30.2" y2="390.2" stroke="#c6c6c6" stroke-width="0.8" /><text x="17.4" y="386.5" font-size="6.5" fill="#333" stroke="#333" textLength="7" lengthAdjust="spacingAndGlyphs" text-anchor="middle" >&lt; &lt;</text><text x="43" y="386.5" font-size="7.5" fill="#333" stroke="#333" textLength="51" lengthAdjust="spacingAndGlyphs" >AutoPick Next &gt; &gt;</text><text x="114" y="372.8" font-size="7.5" fill="#666" stroke="#666" textLength="27.4" lengthAdjust="spacingAndGlyphs" >Start time</text><text x="114" y="388" font-size="7.5" fill="#666" stroke="#666" textLength="25" lengthAdjust="spacingAndGlyphs" >End time</text><rect x="152.8" y="364.8" width="74.5" height="10.8" fill="#fff" stroke="#5b9bd5" stroke-width="0.9" /><text x="156.3" y="373" font-size="6.5" fill="#222" stroke="#222" textLength="38.5" lengthAdjust="spacingAndGlyphs" style="stroke-width:0">ıf/ı·/ır9f ɔ</text><rect x="216.8" y="364.8" width="10.5" height="10.8" fill="#b4d0ee" stroke="#5b9bd5" stroke-width="0.9" /><rect x="217.9" y="365.4" width="8.7" height="8.2" fill="#fff" stroke="#7a7a7a" stroke-width="0.8" /><rect x="217.9" y="365.4" width="8.7" height="1.7" fill="#6e6e6e" stroke="none" stroke-width="1" /><line x1="220.8" y1="367.09999999999997" x2="220.8" y2="373.59999999999997" stroke="#b0b0b0" stroke-width="0.5" /><line x1="223.70000000000002" y1="367.09999999999997" x2="223.70000000000002" y2="373.59999999999997" stroke="#b0b0b0" stroke-width="0.5" /><line x1="217.9" y1="369.4" x2="226.6" y2="369.4" stroke="#b0b0b0" stroke-width="0.5" /><line x1="217.9" y1="371.5" x2="226.6" y2="371.5" stroke="#b0b0b0" stroke-width="0.5" /><rect x="222.4" y="367.5" width="3.4" height="2.5" fill="#f39a4e" stroke="none" stroke-width="1" /><rect x="231.8" y="364.8" width="51.5" height="10.8" fill="#fff" stroke="#c0c0c0" stroke-width="0.8" /><text x="234" y="373" font-size="6.5" fill="#222" stroke="#222" textLength="26" lengthAdjust="spacingAndGlyphs" style="stroke-width:0">b.ʝ ır:··</text><path d="M277.2 369.6 h3 l-1.5 1.8z" fill="#444" stroke="none" stroke-width="1" /><rect x="152.8" y="379.8" width="74.5" height="11.2" fill="#fff" stroke="#c0c0c0" stroke-width="0.8" /><text x="156.3" y="388.3" font-size="6.5" fill="#222" stroke="#222" textLength="39.3" lengthAdjust="spacingAndGlyphs" style="stroke-width:0">ıo/ı·/ır9f ɯ</text><rect x="217.9" y="380.3" width="8.7" height="8.2" fill="#fff" stroke="#7a7a7a" stroke-width="0.8" /><rect x="217.9" y="380.3" width="8.7" height="1.7" fill="#6e6e6e" stroke="none" stroke-width="1" /><line x1="220.8" y1="382.0" x2="220.8" y2="388.5" stroke="#b0b0b0" stroke-width="0.5" /><line x1="223.70000000000002" y1="382.0" x2="223.70000000000002" y2="388.5" stroke="#b0b0b0" stroke-width="0.5" /><line x1="217.9" y1="384.3" x2="226.6" y2="384.3" stroke="#b0b0b0" stroke-width="0.5" /><line x1="217.9" y1="386.40000000000003" x2="226.6" y2="386.40000000000003" stroke="#b0b0b0" stroke-width="0.5" /><rect x="222.4" y="382.40000000000003" width="3.4" height="2.5" fill="#f39a4e" stroke="none" stroke-width="1" /><rect x="231.8" y="379.8" width="51.5" height="11.2" fill="#fff" stroke="#c0c0c0" stroke-width="0.8" /><text x="234" y="388.3" font-size="6.5" fill="#222" stroke="#222" textLength="26" lengthAdjust="spacingAndGlyphs" style="stroke-width:0">b.ʝ ır:··</text><path d="M277.2 384.8 h3 l-1.5 1.8z" fill="#444" stroke="none" stroke-width="1" /><rect x="4.8" y="401.3" width="6.1" height="6.4" fill="#4b4be6" stroke="none" stroke-width="1" /><text x="12" y="406.9" font-size="7.5" fill="#5a5a5a" stroke="#5a5a5a" textLength="14" lengthAdjust="spacingAndGlyphs" >Busy</text><rect x="31.2" y="401.5" width="6" height="6" fill="#fff" stroke="#7d8fc8" stroke-width="0.7" /><path d="M32 406.8 L36.6 402" fill="none" stroke="#7d8fc8" stroke-width="0.7" /><text x="39.7" y="406.9" font-size="7.5" fill="#5a5a5a" stroke="#5a5a5a" textLength="26" lengthAdjust="spacingAndGlyphs" >Tentative</text><rect x="72" y="401.3" width="6" height="6.4" fill="#8b0a8e" stroke="none" stroke-width="1" /><text x="80.8" y="406.9" font-size="7.5" fill="#5a5a5a" stroke="#5a5a5a" textLength="38.5" lengthAdjust="spacingAndGlyphs" >Out of Office</text><pattern id="chk" x="125" y="401" width="2" height="2" patternUnits="userSpaceOnUse"><rect width="1" height="1" fill="#a8a8a8"/><rect x="1" y="1" width="1" height="1" fill="#a8a8a8"/></pattern><rect x="125" y="401" width="6.5" height="6.8" fill="url(#chk)" stroke="none" stroke-width="1" /><rect x="125.3" y="401.3" width="6" height="6.2" fill="none" stroke="#b8b8b8" stroke-width="0.5" /><text x="133.8" y="406.9" font-size="7.5" fill="#5a5a5a" stroke="#5a5a5a" textLength="57.4" lengthAdjust="spacingAndGlyphs" >Working Elsewhere</text><path d="M196.2 407.6 V401.6 H202.6" fill="none" stroke="#444" stroke-width="0.8" /><path d="M202.6 401.6 V407.6 H196.2" fill="none" stroke="#b0b0b0" stroke-width="0.6" /><line x1="196.4" y1="401.8" x2="202.4" y2="407.4" stroke="#444" stroke-width="0.8" /><text x="204.7" y="406.9" font-size="7.5" fill="#5a5a5a" stroke="#5a5a5a" textLength="45.3" lengthAdjust="spacingAndGlyphs" >No Information</text><rect x="256.3" y="401.5" width="6.5" height="6.2" fill="#e6e6e6" stroke="#c9c9c9" stroke-width="0.7" /><text x="265" y="406.9" font-size="7.5" fill="#5a5a5a" stroke="#5a5a5a" textLength="77" lengthAdjust="spacingAndGlyphs" >Outside of working hours</text><rect x="0" y="413" width="782" height="2" fill="#efede9" stroke="none" stroke-width="1" />
</svg>
</body></html>
